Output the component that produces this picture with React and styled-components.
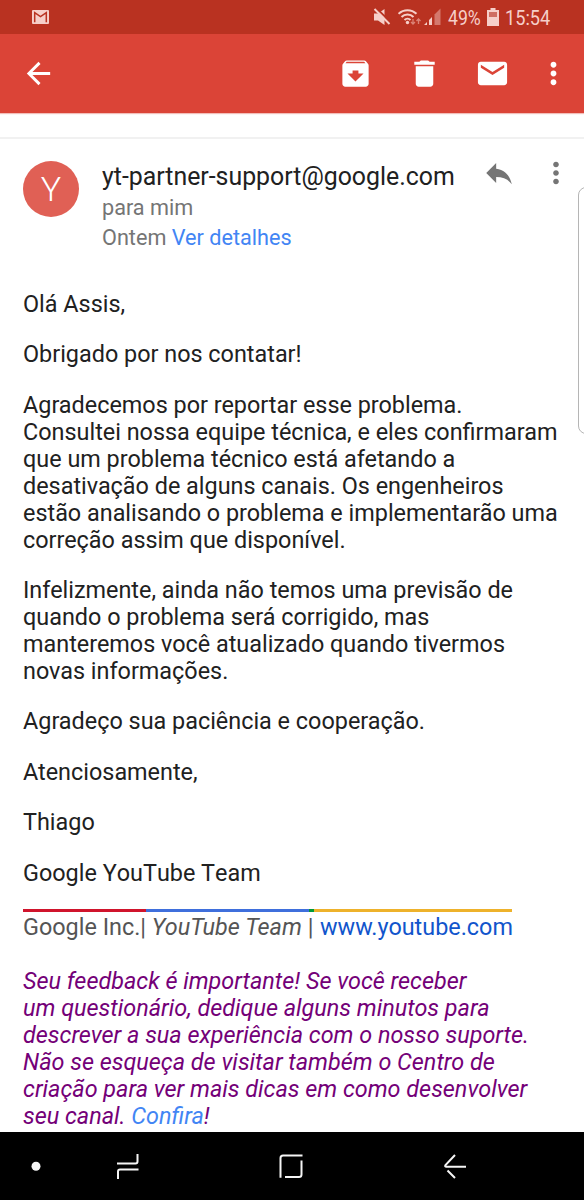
import React from 'react';
import styled, { createGlobalStyle } from 'styled-components';

const statusRed = '#b93221';
const barRed = '#db4437';
const statusTint = '#f6cfc9';
const textColor = '#212121';
const grey = '#757575';
const linkBlue = '#4285f4';

const GlobalStyle = createGlobalStyle`
  body {
    margin: 0;
    background-color: #fff;
    font-family: Roboto, sans-serif;
  }
`;

const Screen = styled.div`
  position: relative;
  display: flex;
  flex-direction: column;
  width: 584px;
  height: 1200px;
  overflow: hidden;
  background-color: #fff;
`;

const StatusBar = styled.div`
  flex: none;
  display: flex;
  align-items: center;
  height: 34px;
  padding: 0 33px 0 32px;
  background-color: ${statusRed};
  color: ${statusTint};
`;

const StatusIcons = styled.div`
  display: flex;
  align-items: center;
  margin-left: auto;
`;

const StatusIcon = styled.svg`
  display: block;
  flex: none;
  margin-right: ${props => props.$gap || 0}px;
`;

const StatusText = styled.span`
  width: ${props => props.$width}px;
  margin-right: ${props => props.$gap || 0}px;
  font-size: 21px;
  line-height: 34px;
  white-space: nowrap;
  transform: translateY(1px) scaleX(${props => props.$stretch});
  transform-origin: left center;
`;

const AppBar = styled.div`
  flex: none;
  display: flex;
  align-items: center;
  box-sizing: border-box;
  height: 79px;
  padding: 0 13.5px 0 21px;
  background-color: ${barRed};
  box-shadow: 0 1px 1px rgba(219, 68, 55, 0.35);
`;

const Actions = styled.div`
  display: flex;
  margin-left: auto;
`;

const Icon = styled.svg`
  display: block;
  flex: none;
  width: ${props => props.$size || 35}px;
  height: ${props => props.$size || 35}px;
  margin-left: ${props => props.$gap || 0}px;
  fill: ${props => props.$color || '#fff'};
`;

const SubjectEdge = styled.div`
  flex: none;
  height: 24px;
  border-bottom: 2px solid #f1f1f1;
`;

const MessageHeader = styled.div`
  flex: none;
  display: flex;
  align-items: flex-start;
  height: 128px;
  padding: 22px 11px 0 23px;
  box-sizing: border-box;
`;

const Avatar = styled.div`
  flex: none;
  width: 56px;
  height: 56px;
  margin-right: 23px;
  border-radius: 50%;
  background-color: #e06055;
  color: #fff;
  font-size: 34px;
  font-weight: 300;
  line-height: 57px;
  text-align: center;
`;

const Sender = styled.div`
  flex: 1;
  white-space: nowrap;
`;

const Address = styled.div`
  color: ${textColor};
  font-size: 24.87px;
  line-height: 32px;
`;

const Meta = styled.div`
  color: ${grey};
  font-size: 21.65px;
  line-height: 29.5px;
`;

const Link = styled.a`
  color: ${props => props.$color || linkBlue};
`;

const MessageActions = styled.div`
  display: flex;
  margin-top: -5px;
`;

const Body = styled.div`
  flex: 1;
  padding: 23.9px 0 0 23px;
  color: ${textColor};
  font-size: 23.4px;
  line-height: 27px;
  white-space: nowrap;
`;

const Paragraph = styled.p`
  margin: 0 0 23.4px;
  font-kerning: ${props => (props.$unkerned ? 'none' : 'auto')};
`;

const Signature = styled.div`
  display: flex;
  margin: -1.5px 0 26.8px;
  color: #555;
`;

const SignaturePart = styled.span`
  width: ${props => props.$width}px;
  padding-top: 2.2px;
  border-top: 3px solid ${props => props.$line};
  white-space: pre;
`;

const Website = styled(Link)`
  margin-left: 6px;
`;

const Feedback = styled.p`
  margin: 0;
  color: #740078;
  font-style: italic;
`;

const ScrollHandle = styled.div`
  position: absolute;
  top: 187px;
  right: -10px;
  width: 14px;
  height: 245px;
  border: 1px solid #b5b5b5;
  border-radius: 8px;
  background-color: #fff;
`;

const NavBar = styled.div`
  flex: none;
  display: flex;
  align-items: center;
  box-sizing: border-box;
  height: 68px;
  padding-left: 31px;
  background-color: #000;
`;

const NavIcon = styled.svg`
  display: block;
  flex: none;
  margin-right: ${props => props.$gap || 0}px;
  fill: none;
  stroke: #f5f5f5;
  stroke-width: 2;
`;

const MORE = 'M12 8c1.1 0 2-.9 2-2s-.9-2-2-2-2 .9-2 2 .9 2 2 2zm0 2c-1.1 0-2 .9-2 2s.9 2 2 2 2-.9 2-2-.9-2-2-2zm0 6c-1.1 0-2 .9-2 2s.9 2 2 2 2-.9 2-2-.9-2-2-2z';

const PARAGRAPHS = [
  ['Olá Assis,'],
  ['Obrigado por nos contatar!'],
  [
    'Agradecemos por reportar esse problema.',
    'Consultei nossa equipe técnica, e eles confirmaram',
    'que um problema técnico está afetando a',
    'desativação de alguns canais. Os engenheiros',
    'estão analisando o problema e implementarão uma',
    'correção assim que disponível.',
  ],
  [
    'Infelizmente, ainda não temos uma previsão de',
    'quando o problema será corrigido, mas',
    'manteremos você atualizado quando tivermos',
    'novas informações.',
  ],
  ['Agradeço sua paciência e cooperação.'],
  ['Atenciosamente,'],
  ['Thiago'],
];

const FEEDBACK = [
  'Seu feedback é importante! Se você receber',
  'um questionário, dedique alguns minutos para',
  'descrever a sua experiência com o nosso suporte.',
  'Não se esqueça de visitar também o Centro de',
  'criação para ver mais dicas em como desenvolver',
];

const PhoneStatus = () => (
  <StatusBar>
    <StatusIcon width="17" height="14" viewBox="0 0 17 14">
      <rect width="17" height="14" rx="1" fill={statusTint} />
      <path d="M2.700 12.200V2.700l5.800 4 5.800-4v9.500" fill="none" stroke={statusRed} strokeWidth="1.500" />
    </StatusIcon>
    <StatusIcons>
      <StatusIcon width="18" height="18" viewBox="0 0 18 18" $gap={7}>
        <path d="M1 5.500v7h4l6.500 4.500V1L5 5.500z" fill={statusTint} />
        <path d="M2 -1L18.500 15" stroke={statusRed} strokeWidth="2" />
        <path d="M1.500 1L16.500 16" stroke={statusTint} strokeWidth="2" />
      </StatusIcon>
      <StatusIcon width="24" height="18" viewBox="0 0 24 18" $gap={2}>
        <g fill="none" stroke={statusTint} strokeWidth="2">
          <path d="M.5 5.800a13 13 0 0 1 18 0" />
          <path d="M3.500 9a8.500 8.500 0 0 1 12 0" />
          <path d="M6.500 12a4.300 4.300 0 0 1 6 0" />
        </g>
        <circle cx="9.500" cy="14.500" r="1.700" fill={statusTint} />
        <path d="M15 11v5m-2-2l2 2 2-2M20.500 16v-5m-2 2l2-2 2 2" fill="none" stroke="#db8377" strokeWidth="1.300" />
      </StatusIcon>
      <StatusIcon width="18" height="18" viewBox="0 0 18 18" $gap={6}>
        <path d="M10.500 6.500L16.500.5v16.500h-6z" fill="#d4786d" />
        <path d="M0 17l3-3v3zM5 12l3-3v8H5z" fill={statusTint} />
      </StatusIcon>
      <StatusText $width={33} $gap={6} $stretch={0.84}>49%</StatusText>
      <StatusIcon width="12" height="18" viewBox="0 0 12 18" $gap={6}>
        <path d="M3.500 0h5v2H12v16H0V2h3.500z" fill={statusTint} />
        <path d="M2 4h8v5H2z" fill="#cf6e62" />
      </StatusIcon>
      <StatusText $width={46} $stretch={0.865}>15:54</StatusText>
    </StatusIcons>
  </StatusBar>
);

const Toolbar = () => (
  <AppBar>
    <Icon viewBox="0 0 24 24">
      <path d="M20 11H7.830l5.590-5.590L12 4l-8 8 8 8 1.410-1.410L7.830 13H20z" />
    </Icon>
    <Actions>
      <Icon viewBox="0 0 24 24">
        <path d="M20.540 5.230l-1.390-1.680C18.880 3.210 18.470 3 18 3H6c-.47 0-.88.21-1.160.55L3.460 5.230C3.170 5.570 3 6.020 3 6.500V19c0 1.100.9 2 2 2h14c1.100 0 2-.9 2-2V6.500c0-.48-.17-.93-.46-1.270zM12 17.500L6.500 12H10v-2h4v2h3.500L12 17.500zM5.120 5l.81-1h12l.94 1H5.120z" />
      </Icon>
      <Icon viewBox="0 0 24 24" $gap={33.5}>
        <path d="M6 19c0 1.100.9 2 2 2h8c1.100 0 2-.9 2-2V7H6v12zM19 4h-3.500l-1-1h-5l-1 1H5v2h14V4z" />
      </Icon>
      <Icon viewBox="0 0 24 24" $gap={33.5}>
        <path d="M20 4H4c-1.100 0-1.990.9-1.990 2L2 18c0 1.100.9 2 2 2h16c1.100 0 2-.9 2-2V6c0-1.100-.9-2-2-2zm0 4l-8 5-8-5V6l8 5 8-5v2z" />
      </Icon>
      <Icon viewBox="0 0 24 24" $gap={25.5}>
        <path d={MORE} />
      </Icon>
    </Actions>
  </AppBar>
);

const Lines = ({ lines }) =>
  lines.map((line, i) => (
    <React.Fragment key={line}>
      {i > 0 && <br />}
      {line}
    </React.Fragment>
  ));

const Navigation = () => (
  <NavBar>
    <NavIcon width="10" height="10" viewBox="0 0 10 10" $gap={75}>
      <circle cx="5" cy="5.300" r="4.500" fill="#f5f5f5" stroke="none" />
    </NavIcon>
    <NavIcon width="24" height="26" viewBox="0 0 24 26" $gap={139}>
      <path d="M1 10.500h18.500q2 0 2-2V1M2 26v-7.500q0-2 2-2h18.500" />
    </NavIcon>
    <NavIcon width="26" height="26" viewBox="0 0 26 26" $gap={138}>
      <path d="M1.500 24.800V5q0-2.500 2.500-2.500h19.500M22.500 7.500v14q0 2.500-2.500 2.500H6" />
    </NavIcon>
    <NavIcon width="26" height="26" viewBox="0 0 26 26">
      <path d="M12 2L2.500 12q-1 1.700.5 1.700h20M4.500 17.500l7.500 7.500" />
    </NavIcon>
  </NavBar>
);

const App = () => (
  <Screen>
    <GlobalStyle />
    <PhoneStatus />
    <Toolbar />
    <SubjectEdge />

    <MessageHeader>
      <Avatar>Y</Avatar>
      <Sender>
        <Address>yt-partner-support@google.com</Address>
        <Meta>para mim</Meta>
        <Meta>
          Ontem <Link>Ver detalhes</Link>
        </Meta>
      </Sender>
      <MessageActions>
        <Icon viewBox="0 0 24 24" $size={34} $color={grey}>
          <path d="M10 9V5l-7 7 7 7v-4.100c5 0 8.500 1.600 11 5.100-1-5-4-10-11-11z" />
        </Icon>
        <Icon viewBox="0 0 24 24" $size={34} $color={grey} $gap={23}>
          <path d={MORE} />
        </Icon>
      </MessageActions>
    </MessageHeader>

    <Body>
      {PARAGRAPHS.map(lines => (
        <Paragraph key={lines[0]}>
          <Lines lines={lines} />
        </Paragraph>
      ))}
      <Paragraph $unkerned>Google YouTube Team</Paragraph>
      <Signature>
        <SignaturePart $line="#d0142c" $width={123}>Google Inc.|</SignaturePart>
        <SignaturePart $line="#3f6fdc" $width={163}>
          {' '}
          <i>YouTube Team</i> |
        </SignaturePart>
        <SignaturePart $line="#009939" $width={5} />
        <SignaturePart $line="#eeb22b" $width={198}>
          <Website $color="#1155cc">www.youtube.com</Website>
        </SignaturePart>
      </Signature>
      <Feedback>
        <Lines lines={FEEDBACK} />
        <br />
        seu canal. <Link>Confira</Link>!
      </Feedback>
    </Body>

    <ScrollHandle />
    <Navigation />
  </Screen>
);

export default App;
